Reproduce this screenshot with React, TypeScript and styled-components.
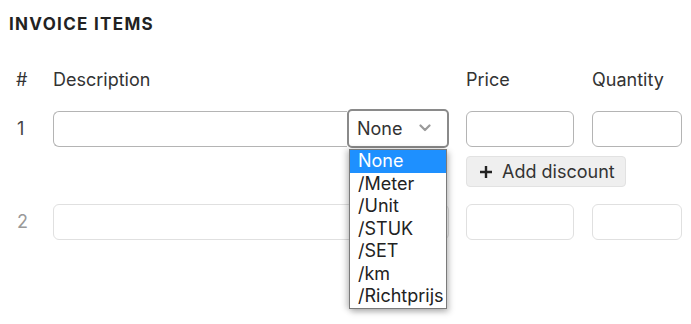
import React from "react";
import styled, { createGlobalStyle } from "styled-components";

const Global = createGlobalStyle`
  html, body { margin: 0; padding: 0; background: #fff; }
  body { font-family: Inter, "Noto Sans", sans-serif; color: #333; }
`;

const Page = styled.div`
  padding: 14px 0 0 9px;
  width: 691px;
  height: 324px;
  box-sizing: border-box;
  overflow: hidden;
`;

const Title = styled.h2`
  margin: 0;
  font-size: 17px;
  font-weight: 700;
  letter-spacing: 0.077em;
  color: #222;
  line-height: 21px;
`;

const Grid = styled.div`
  display: grid;
  grid-template-columns: 27px 396px 109px 90px;
  column-gap: 17px;
  margin-top: 34px;
`;

const Head = styled.div<{ $pad?: number }>`
  font-size: 18px;
  line-height: 22px;
  color: #333;
  padding-left: ${(p) => p.$pad ?? 0}px;
  white-space: nowrap;
  margin-bottom: 20px;
`;

const Num = styled.div<{ $muted?: boolean }>`
  font-size: 18px;
  line-height: 36px;
  padding-left: 8px;
  color: ${(p) => (p.$muted ? "#999" : "#444")};
`;

const Cell = styled.div`
  display: flex;
  flex-direction: column;
  align-items: flex-start;
  position: relative;
`;

const DescWrap = styled.div`
  display: flex;
  width: 100%;
  position: relative;
`;

const Input = styled.div<{ $muted?: boolean; $w?: string }>`
  box-sizing: border-box;
  height: 36px;
  width: ${(p) => p.$w ?? "100%"};
  border: 1px solid ${(p) => (p.$muted ? "#e0e0e0" : "#b4b4b4")};
  border-radius: 6px;
  background: #fff;
`;

const DescInput = styled(Input)`
  flex: 1;
  border-radius: 6px 0 0 6px;
  border-right: none;
`;

const SelectBox = styled.div`
  box-sizing: border-box;
  width: 102px;
  height: 39px;
  margin-top: -2px;
  border: 2px solid #8a8a8a;
  border-radius: 5px;
  display: flex;
  align-items: center;
  padding-left: 8px;
  font-size: 18px;
  color: #333;
  background: #fff;
  position: relative;
  z-index: 2;
`;

const Chevron = styled.svg`
  position: absolute;
  right: 16px;
  top: 13px;
`;

const List = styled.ul`
  position: absolute;
  top: 38px;
  left: 2px;
  width: 98px;
  margin: 0;
  padding: 0;
  list-style: none;
  background: #fff;
  border: 1px solid #7a7a7a;
  box-sizing: border-box;
  box-shadow: 2px 3px 6px rgba(0, 0, 0, 0.25), -3px 0 6px rgba(0, 0, 0, 0.18);
  z-index: 5;
`;

const Option = styled.li<{ $active?: boolean }>`
  height: 22.5px;
  line-height: 22.5px;
  font-size: 18px;
  padding-left: 8px;
  white-space: nowrap;
  overflow: hidden;
  color: ${(p) => (p.$active ? "#fff" : "#222")};
  background: ${(p) => (p.$active ? "#1e90ff" : "transparent")};
`;

const SelectArea = styled.div`
  position: relative;
`;

const Discount = styled.button`
  margin-top: 9px;
  height: 31px;
  box-sizing: border-box;
  padding: 0 10px 0 12px;
  border: 1px solid #e2e2e2;
  border-radius: 4px;
  background: #efefef;
  font-family: Inter, "Noto Sans", sans-serif;
  font-size: 18px;
  color: #333;
  display: flex;
  align-items: center;
  gap: 9px;
  white-space: nowrap;
`;

const Spacer = styled.div`
  grid-column: 1 / -1;
  height: 17px;
`;

const options = ["None", "/Meter", "/Unit", "/STUK", "/SET", "/km", "/Richtprijs"];

export default function App() {
  return (
    <Page>
      <Global />
      <Title>INVOICE ITEMS</Title>
      <Grid>
        <Head $pad={7}>#</Head>
        <Head>Description</Head>
        <Head>Price</Head>
        <Head>Quantity</Head>

        <Num>1</Num>
        <Cell>
          <DescWrap>
            <DescInput />
            <SelectArea>
              <SelectBox>
                None
                <Chevron width="12" height="8" viewBox="0 0 12 8">
                  <path d="M1.5 1.5 L6 6 L10.5 1.5" fill="none" stroke="#9a9a9a" strokeWidth="2.2" strokeLinecap="round" strokeLinejoin="round" />
                </Chevron>
              </SelectBox>
              <List>
                {options.map((o, i) => (
                  <Option key={o} $active={i === 0}>{o}</Option>
                ))}
              </List>
            </SelectArea>
          </DescWrap>
        </Cell>
        <Cell>
          <Input $w="108px" />
          <Discount>
            <svg width="14" height="14" viewBox="0 0 14 14">
              <path d="M7 1 V13 M1 7 H13" stroke="#222" strokeWidth="2.4" />
            </svg>
            Add discount
          </Discount>
        </Cell>
        <Cell>
          <Input />
        </Cell>

        <Spacer />

        <Num $muted>2</Num>
        <Cell>
          <Input $muted />
        </Cell>
        <Cell>
          <Input $muted $w="108px" />
        </Cell>
        <Cell>
          <Input $muted />
        </Cell>
      </Grid>
    </Page>
  );
}
